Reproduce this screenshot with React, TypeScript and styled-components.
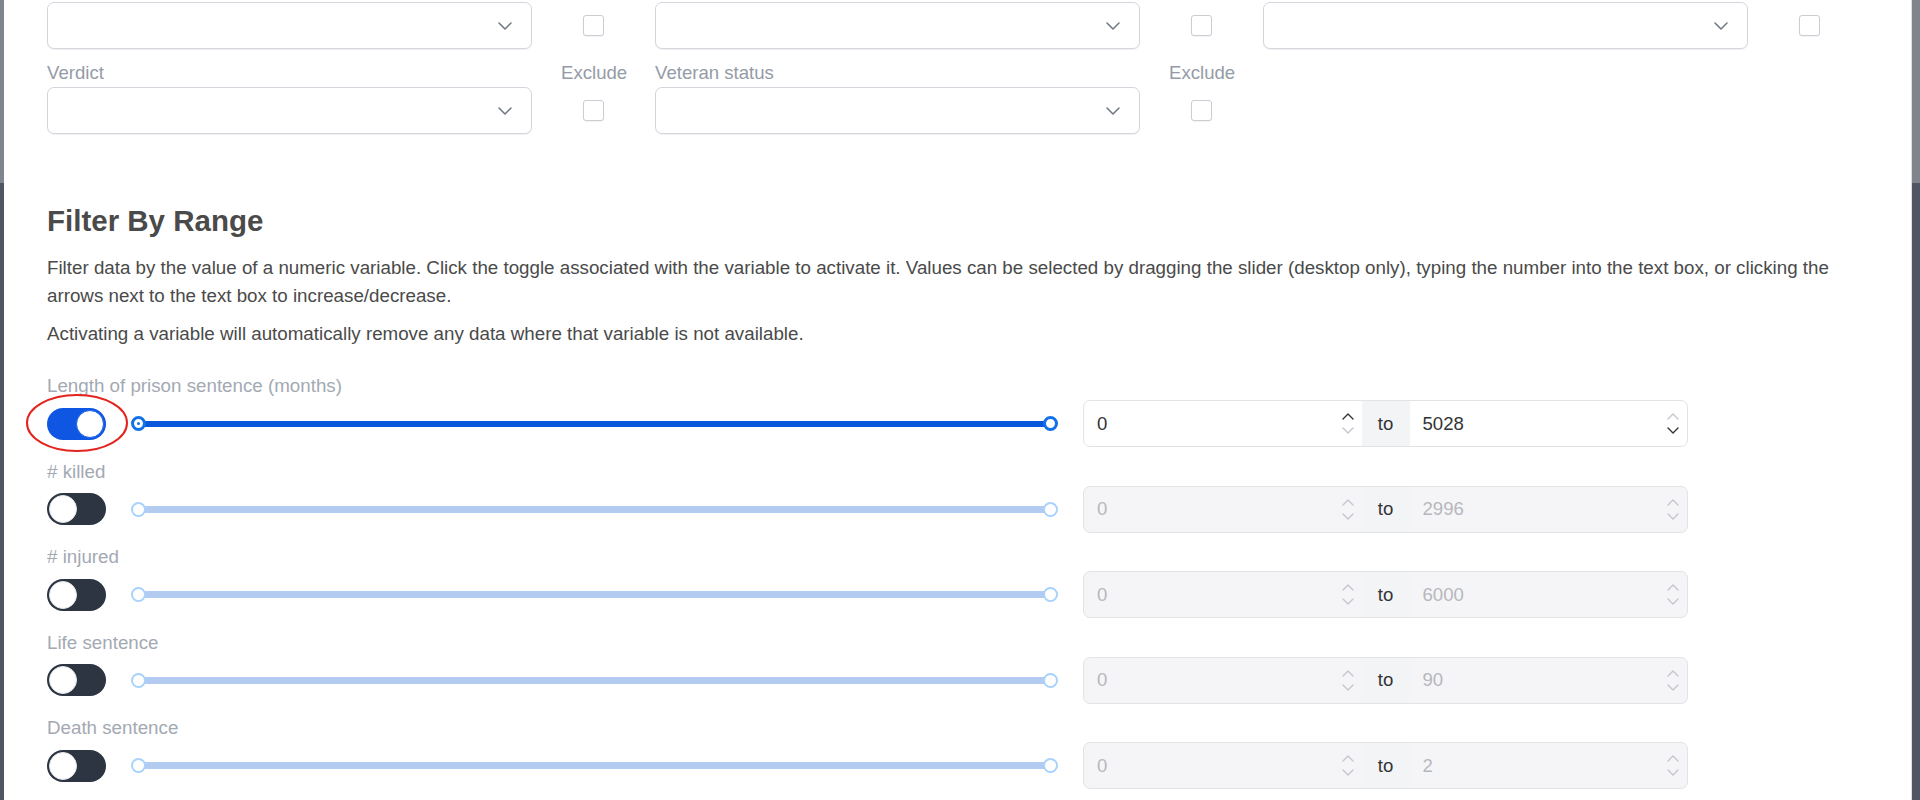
import React from "react";
import styled, { createGlobalStyle } from "styled-components";

const GlobalStyle = createGlobalStyle`
  html, body { margin: 0; padding: 0; }
  body {
    width: 1920px;
    height: 800px;
    overflow: hidden;
    background: #4f5563;
    font-family: "Liberation Sans", Arial, Helvetica, sans-serif;
  }
  #root { height: 800px; }
`;

const Backdrop = styled.div`
  height: 800px;
  display: flex;
  padding: 0 8px 0 4px;
  background: linear-gradient(to bottom, #80848c 0, #80848c 183px, #4f5563 183px);
`;

const Modal = styled.div`
  position: relative;
  flex: 1;
  background: #ffffff;
  border-right: 1px solid #dcdce8;
  overflow: hidden;
  padding: 2px 0 0 43px;
`;

const FilterGrid = styled.div`
  display: grid;
  grid-template-columns: 485px 65px 485px 65px 485px 65px;
  column-gap: 29px;
  align-items: center;
`;

const FieldLabel = styled.div`
  font-size: 18.6px;
  line-height: 22px;
  color: #949ba6;
  margin: 13px 0 3px;
  white-space: nowrap;
`;

const SelectBox = styled.div`
  height: 47px;
  box-sizing: border-box;
  border: 1px solid #d3d7dd;
  border-radius: 7px;
  box-shadow: 0 1px 1px rgba(0, 0, 0, 0.06);
  background: #fff;
  display: flex;
  align-items: center;
  justify-content: flex-end;
  padding-right: 19px;
`;

const CheckCell = styled.div`
  display: flex;
  align-items: center;
  justify-content: center;
`;

const CheckBox = styled.div`
  width: 21px;
  height: 21px;
  box-sizing: border-box;
  border: 1px solid #c9ced5;
  border-radius: 3px;
  background: #fff;
  box-shadow: 0 1px 1px rgba(0, 0, 0, 0.05);
`;

const Heading = styled.h2`
  margin: 70px 0 0;
  font-size: 29.5px;
  line-height: 34px;
  font-weight: 700;
  color: #4a4a4a;
`;

const Paragraph = styled.p<{ $gap?: number }>`
  margin: ${(p) => p.$gap ?? 0}px 0 0;
  width: 1820px;
  font-size: 18.75px;
  line-height: 28px;
  color: #4a4a4a;
`;

const RangeList = styled.div`
  margin-top: 27px;
  display: flex;
  flex-direction: column;
  gap: 13.6px;
`;

const RangeField = styled.div`
  display: flex;
  flex-direction: column;
  gap: 3px;
`;

const RangeLabel = styled.div`
  font-size: 18.75px;
  line-height: 22px;
  color: #a3a9b3;
`;

const ControlRow = styled.div`
  display: flex;
  align-items: center;
  height: 47px;
`;

const Toggle = styled.div<{ $on: boolean }>`
  width: 59px;
  height: 32px;
  box-sizing: border-box;
  border-radius: 16px;
  padding: 2px;
  background: ${(p) => (p.$on ? "#0f57e2" : "#2c3541")};
  display: flex;
  justify-content: ${(p) => (p.$on ? "flex-end" : "flex-start")};
  flex-shrink: 0;
`;

const Knob = styled.div<{ $on: boolean }>`
  width: 28px;
  height: 28px;
  box-sizing: border-box;
  border-radius: 50%;
  background: #fff;
  border: ${(p) => (p.$on ? "1.5px solid #1b62e6" : "1px solid #e3e6ea")};
`;

const Slider = styled.div`
  width: 927px;
  margin: 0 25px;
  display: flex;
  align-items: center;
  flex-shrink: 0;
`;

const Bar = styled.div<{ $on: boolean }>`
  flex: 1;
  height: ${(p) => (p.$on ? 6 : 7)}px;
  margin: 0 -7px;
  background: ${(p) => (p.$on ? "#0a57db" : "#b3cbf1")};
`;

const Thumb = styled.div<{ $on: boolean; $dot?: boolean }>`
  position: relative;
  z-index: 1;
  width: 15px;
  height: 15px;
  box-sizing: border-box;
  border-radius: 50%;
  background: #fff;
  border: ${(p) => (p.$on ? "3px solid #1371e8" : "2.5px solid #a8d2fb")};
  display: flex;
  align-items: center;
  justify-content: center;
  &::after {
    content: "";
    display: ${(p) => (p.$dot ? "block" : "none")};
    width: 3px;
    height: 3px;
    border-radius: 50%;
    background: #1371e8;
  }
`;

const InputGroup = styled.div<{ $disabled: boolean }>`
  width: 605px;
  height: 47px;
  box-sizing: border-box;
  border: 1px solid #e1e3e7;
  border-radius: 7px;
  overflow: hidden;
  display: flex;
  background: ${(p) => (p.$disabled ? "#f5f5f7" : "#ffffff")};
`;

const NumberBox = styled.div<{ $disabled: boolean }>`
  flex: 1;
  display: flex;
  align-items: center;
  justify-content: space-between;
  padding: 0 7px 0 13px;
  font-size: 18.6px;
  color: ${(p) => (p.$disabled ? "#b5b8bd" : "#333333")};
`;

const Addon = styled.div`
  width: 48px;
  flex-shrink: 0;
  display: flex;
  align-items: center;
  justify-content: center;
  background: #f3f4f6;
  font-size: 18.6px;
  color: #333333;
`;

const Spinner = styled.div`
  display: flex;
  flex-direction: column;
  align-items: center;
  gap: 7px;
  width: 14px;
`;

const Ellipse = styled.svg`
  position: absolute;
  left: 21px;
  top: 393px;
  pointer-events: none;
`;

const Chevron = ({ dir, color }: { dir: "up" | "down"; color: string }) => (
  <svg width="12" height="7" viewBox="0 0 12 7">
    <path
      d={dir === "up" ? "M1 6 L6 1 L11 6" : "M1 1 L6 6 L11 1"}
      fill="none"
      stroke={color}
      strokeWidth="1.4"
      strokeLinecap="round"
      strokeLinejoin="round"
    />
  </svg>
);

const SelectChevron = () => (
  <svg width="14" height="8" viewBox="0 0 14 8">
    <path d="M1 1 L7 7 L13 1" fill="none" stroke="#6f7682" strokeWidth="1.5" strokeLinecap="round" strokeLinejoin="round" />
  </svg>
);

const Select = () => (
  <SelectBox>
    <SelectChevron />
  </SelectBox>
);

const Check = () => (
  <CheckCell>
    <CheckBox />
  </CheckCell>
);

const LIGHT = "#c3c7cd";
const DARK = "#333333";

type RangeDef = { label: string; min: number; max: number; on: boolean };

const ranges: RangeDef[] = [
  { label: "Length of prison sentence (months)", min: 0, max: 5028, on: true },
  { label: "# killed", min: 0, max: 2996, on: false },
  { label: "# injured", min: 0, max: 6000, on: false },
  { label: "Life sentence", min: 0, max: 90, on: false },
  { label: "Death sentence", min: 0, max: 2, on: false },
];

const RangeRow = ({ r }: { r: RangeDef }) => (
  <RangeField>
    <RangeLabel>{r.label}</RangeLabel>
    <ControlRow>
      <Toggle $on={r.on}>
        <Knob $on={r.on} />
      </Toggle>
      <Slider>
        <Thumb $on={r.on} $dot={r.on} />
        <Bar $on={r.on} />
        <Thumb $on={r.on} />
      </Slider>
      <InputGroup $disabled={!r.on}>
        <NumberBox $disabled={!r.on}>
          <span>{r.min}</span>
          <Spinner>
            <Chevron dir="up" color={r.on ? DARK : LIGHT} />
            <Chevron dir="down" color={LIGHT} />
          </Spinner>
        </NumberBox>
        <Addon>to</Addon>
        <NumberBox $disabled={!r.on}>
          <span>{r.max}</span>
          <Spinner>
            <Chevron dir="up" color={LIGHT} />
            <Chevron dir="down" color={r.on ? DARK : LIGHT} />
          </Spinner>
        </NumberBox>
      </InputGroup>
    </ControlRow>
  </RangeField>
);

export default function App() {
  return (
    <>
      <GlobalStyle />
      <Backdrop>
        <Modal>
          <FilterGrid>
            <Select />
            <Check />
            <Select />
            <Check />
            <Select />
            <Check />
            <FieldLabel>Verdict</FieldLabel>
            <FieldLabel>Exclude</FieldLabel>
            <FieldLabel>Veteran status</FieldLabel>
            <FieldLabel>Exclude</FieldLabel>
            <div />
            <div />
            <Select />
            <Check />
            <Select />
            <Check />
          </FilterGrid>
          <Heading>Filter By Range</Heading>
          <Paragraph $gap={16}>
            Filter data by the value of a numeric variable. Click the toggle associated with the variable to activate
            it. Values can be selected by dragging the slider (desktop only), typing the number into the text box, or
            clicking the arrows next to the text box to increase/decrease.
          </Paragraph>
          <Paragraph $gap={10}>
            Activating a variable will automatically remove any data where that variable is not available.
          </Paragraph>
          <RangeList>
            {ranges.map((r) => (
              <RangeRow key={r.label} r={r} />
            ))}
          </RangeList>
          <Ellipse width="104" height="60" viewBox="0 0 104 60">
            <ellipse cx="52" cy="30" rx="50" ry="28" fill="none" stroke="#e4231d" strokeWidth="2" />
          </Ellipse>
        </Modal>
      </Backdrop>
    </>
  );
}
